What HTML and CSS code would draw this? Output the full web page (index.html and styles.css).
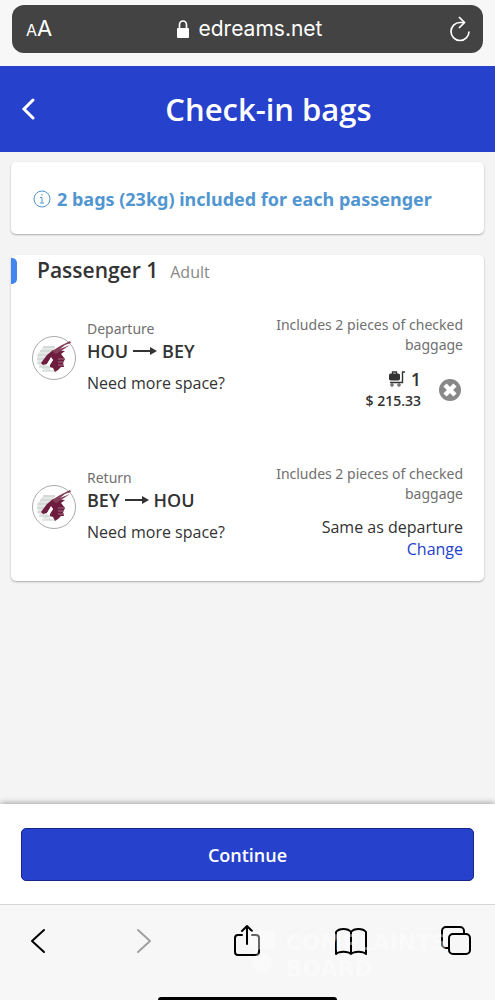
FILE: index.html
```html
<!DOCTYPE html>
<html lang="en">
<head>
    <meta charset="utf-8">
    <meta name="viewport" content="width=device-width, initial-scale=1">
    <title>Check-in bags</title>
    <link rel="stylesheet" href="styles.css">
</head>
<body>
    <svg class="defs" aria-hidden="true">
        <symbol id="oryx" viewBox="0 0 44 44">
            <circle cx="22" cy="22" r="21.500" fill="#fff" stroke="#aaa"/>
            <path d="M12 10h11l-2 6-6 5-4 7 6 2 2 5-7-1-6-6-1-9z" fill="#e3e8e6"/>
            <path d="M11 11h12M8 15h13M6 19h10M5 23h8M5 27h6M7 31h13M10 35h13" stroke="#c6cdca"/>
            <path d="M21 14l-6 5-6 8 2 2 4-1 4-6 2 2-3 4v3l3 1 2 4 3-2 3-3h3l-1-4 2-4-4-5 4-3z" fill="#6f1d3f"/>
            <path d="M20 15l8-5 10-5 1 2-6 2-5 4 10-4-9 6-5 3z" fill="#84405a"/>
            <path d="M26 23h6M26 26h6M26 29h6" stroke="#a56f83"/>
            <path d="M19 21l-4 7 3 1 3-5z" fill="#fff"/>
        </symbol>
        <symbol id="arrow" viewBox="0 0 24 10">
            <path d="M0 5h18" stroke="currentColor" stroke-width="2"/>
            <path d="M17 1l7 4-7 4z" fill="currentColor"/>
        </symbol>
    </svg>

    <div class="browser-top">
        <div class="address">
            <button class="text-size" aria-label="Text size"><small>A</small>A</button>
            <div class="url">
                <svg width="12" height="18" viewBox="0 0 12 18"><path d="M2.500 9V5a3.500 4 0 0 1 7 0v4" fill="none" stroke="#fff" stroke-width="1.700"/><rect y="8" width="12" height="10" rx="1" fill="#fff"/></svg>
                <span>edreams.net</span>
            </div>
            <button class="reload" aria-label="Reload">
                <svg width="22" height="26" viewBox="0 0 22 26" fill="none" stroke="#fff" stroke-width="1.700"><path d="M15 6.500H11a9 9 0 1 0 9 9"/><path d="M10 1l5.500 5.500L10 12"/></svg>
            </button>
        </div>
    </div>

    <header class="header">
        <button aria-label="Back">
            <svg width="14" height="22" viewBox="0 0 14 22"><path d="M12 2L3 11l9 9" fill="none" stroke="#fff" stroke-width="3" stroke-linecap="round"/></svg>
        </button>
        <h1>Check-in bags</h1>
    </header>

    <main>
        <section class="card notice">
            <svg width="18" height="18" viewBox="0 0 18 18" fill="none" stroke="#5196d0"><circle cx="9" cy="9" r="8"/><path d="M7 7.500h2v5M7 13h4M9 4v1.500"/></svg>
            <p>2 bags (23kg) included for each passenger</p>
        </section>

        <section class="card passenger">
            <h2>Passenger 1 <span>Adult</span></h2>

            <div class="trip">
                <svg class="airline" width="44" height="44"><use href="#oryx"/></svg>
                <div class="route">
                    <p class="label">Departure</p>
                    <h3>HOU <svg width="24" height="10"><use href="#arrow"/></svg> BEY</h3>
                    <p>Need more space?</p>
                </div>
                <div class="bags">
                    <p class="included">Includes 2 pieces of checked baggage</p>
                    <div class="extra">
                        <div class="cost">
                            <p class="count">
                                <svg width="16" height="16" viewBox="0 0 16 16" fill="none" stroke="#333"><rect x="0.500" y="3" width="10" height="6" rx="1" fill="#333"/><path d="M3.500 3V1h4v2M16 1h-2.500v10.500H1" stroke-width="1.400"/><circle cx="3" cy="14" r="1.200"/><circle cx="10" cy="14" r="1.200"/></svg>
                                1
                            </p>
                            <p class="price">$ 215.33</p>
                        </div>
                        <button aria-label="Remove bag">
                            <svg width="22" height="22" viewBox="0 0 22 22"><circle cx="11" cy="11" r="11" fill="#888"/><path d="M6 6l10 10M16 6L6 16" stroke="#fff" stroke-width="4.500"/></svg>
                        </button>
                    </div>
                </div>
            </div>

            <div class="trip">
                <svg class="airline" width="44" height="44"><use href="#oryx"/></svg>
                <div class="route">
                    <p class="label">Return</p>
                    <h3>BEY <svg width="24" height="10"><use href="#arrow"/></svg> HOU</h3>
                    <p>Need more space?</p>
                </div>
                <div class="bags">
                    <p class="included">Includes 2 pieces of checked baggage</p>
                    <div class="same">
                        <p>Same as departure</p>
                        <a href="#">Change</a>
                    </div>
                </div>
            </div>
        </section>
    </main>

    <div class="continue">
        <button>Continue</button>
    </div>

    <nav class="browser-bottom">
        <div class="tools">
            <button aria-label="Back"><svg width="30" height="36" viewBox="0 0 30 36"><path d="M20 7L8 18l12 11"/></svg></button>
            <button class="off" aria-label="Forward" disabled><svg width="30" height="36" viewBox="0 0 30 36"><path d="M10 7l12 11-12 11"/></svg></button>
            <button aria-label="Share"><svg width="30" height="36" viewBox="0 0 30 36"><path d="M10 12H6a3 3 0 0 0-3 3v14a3 3 0 0 0 3 3h18a3 3 0 0 0 3-3V15a3 3 0 0 0-3-3h-4M15 21V3M10 8l5-5 5 5"/></svg></button>
            <button aria-label="Bookmarks"><svg width="32" height="36" viewBox="0 0 32 36"><path d="M16 31V9C13 5 4 5 1 9v22c3-3 12-3 15 0 3-3 12-3 15 0V9c-3-4-12-4-15 0"/></svg></button>
            <button aria-label="Tabs"><svg width="30" height="36" viewBox="0 0 30 36"><path d="M7 25H5a4 4 0 0 1-4-4V8a4 4 0 0 1 4-4h14a4 4 0 0 1 4 4v3"/><rect x="8" y="11" width="21" height="20" rx="4"/></svg></button>
        </div>
        <div class="watermark">
            <svg width="32" height="44" viewBox="0 0 32 44"><path d="M3 1h26v18H14l-6 5v-5H3z" fill="#fff"/><circle cx="16" cy="33" r="10" fill="#fff"/></svg>
            <p>COMPLAINTS<br>BOARD</p>
        </div>
        <div class="home-bar"></div>
    </nav>
</body>
</html>
```
FILE: styles.css
```css
* {
    box-sizing: border-box;
}

body {
    margin: 0;
    min-height: 100vh;
    display: flex;
    flex-direction: column;
    background: #f4f4f4;
    color: #333;
    font-family: "Open Sans", sans-serif;
    font-size: 16px;
    line-height: 22px;
}

h1, h2, h3, p {
    margin: 0;
}

button {
    padding: 0;
    border: 0;
    background: none;
    color: inherit;
    font: inherit;
    cursor: pointer;
}

svg {
    display: block;
}

a {
    color: #2641cc;
    text-decoration: none;
}

.defs {
    position: absolute;
    width: 0;
    height: 0;
}

/* address bar */
.browser-top {
    padding: 5px 12px 13px;
    background: #f7f7f7;
}

.address {
    display: grid;
    grid-template-columns: 48px 1fr 48px;
    align-items: center;
    height: 48px;
    border-radius: 12px;
    background: #434343;
    color: #fff;
    font-family: Inter, sans-serif;
}

.text-size {
    padding-left: 14px;
    text-align: left;
    font-size: 22px;
}

.text-size small {
    font-size: 16px;
}

.url {
    display: flex;
    align-items: center;
    justify-content: center;
    gap: 10px;
    padding-left: 4px;
    font-size: 21px;
}

.reload {
    justify-self: end;
    padding-right: 12px;
}

/* page header */
.header {
    display: grid;
    grid-template-columns: 42px 1fr;
    align-items: center;
    height: 86px;
    background: #2641cc;
    color: #fff;
}

.header button {
    padding-left: 21px;
}

.header h1 {
    font-size: 31px;
    font-weight: 600;
    line-height: 40px;
    text-align: center;
}

main {
    flex: 1;
    padding: 10px 11px;
}

.card {
    border-radius: 5px;
    background: #fff;
    box-shadow: 0 1px 2px rgba(0, 0, 0, 0.3);
}

.notice {
    display: flex;
    align-items: center;
    gap: 6px;
    margin-bottom: 21px;
    padding: 26px 22px 24px;
    color: #5196d0;
}

.notice p {
    font-family: "Noto Sans", sans-serif;
    font-size: 18px;
    font-weight: bold;
}

.passenger {
    padding: 3px 0 21px;
}

.passenger h2 {
    display: flex;
    align-items: baseline;
    margin-bottom: 31px;
    font-size: 21px;
    font-weight: 600;
    line-height: 24px;
}

.passenger h2::before {
    content: "";
    align-self: stretch;
    width: 6px;
    margin-right: 20px;
    border-radius: 0 5px 5px 0;
    background: #4285ee;
}

.passenger h2 span {
    margin-left: 12px;
    color: #888;
    font-size: 16px;
    font-weight: normal;
}

.trip {
    display: flex;
    padding: 0 21px;
}

.trip + .trip {
    margin-top: 52px;
}

.airline {
    margin-top: 21px;
}

.route {
    flex: 1;
    padding: 3px 0 0 11px;
}

.label {
    color: #707070;
    font-family: "Noto Sans", sans-serif;
    font-size: 14px;
}

.route h3 {
    display: flex;
    align-items: center;
    gap: 5px;
    margin-bottom: 10px;
    font-size: 18px;
    font-weight: 600;
}

.bags {
    width: 200px;
    text-align: right;
}

.included {
    color: #707070;
    font-family: "Noto Sans", sans-serif;
    font-size: 14px;
    line-height: 20px;
}

.extra {
    display: flex;
    align-items: center;
    justify-content: flex-end;
    gap: 18px;
    margin-top: 13px;
    padding-right: 2px;
}

.cost {
    font-weight: 600;
}

.count {
    display: flex;
    align-items: center;
    justify-content: flex-end;
    gap: 6px;
    font-size: 18px;
}

.price {
    font-size: 14px;
}

.same {
    margin-top: 12px;
}

/* bottom call to action */
.continue {
    padding: 24px 21px 23px;
    border-bottom: 1px solid #d5d5d5;
    background: #fff;
    box-shadow: 0 -1px 6px rgba(0, 0, 0, 0.35);
}

.continue button {
    display: block;
    width: 100%;
    height: 53px;
    border: 1px solid #152684;
    border-radius: 5px;
    background: #2641cc;
    color: #fff;
    font-size: 18px;
    font-weight: 600;
}

/* browser toolbar */
.browser-bottom {
    position: relative;
    height: 95px;
    background: #f7f7f7;
    overflow: hidden;
}

.tools {
    display: flex;
    justify-content: space-between;
    padding: 18px 24px;
}

.tools svg {
    fill: none;
    stroke: #000;
    stroke-width: 2;
    stroke-linecap: round;
    stroke-linejoin: round;
}

.tools .off svg {
    stroke: #a0a0a0;
}

.watermark {
    position: absolute;
    right: 48px;
    bottom: 18px;
    display: flex;
    gap: 8px;
    color: #fff;
    font-family: "DejaVu Sans", sans-serif;
    font-size: 22px;
    font-weight: bold;
    line-height: 26px;
    opacity: 0.4;
    pointer-events: none;
}

.watermark p {
    font-weight: bold;
}

.home-bar {
    position: absolute;
    bottom: 0;
    left: 32%;
    right: 32%;
    height: 3px;
    border-radius: 3px 3px 0 0;
    background: #000;
}
```
